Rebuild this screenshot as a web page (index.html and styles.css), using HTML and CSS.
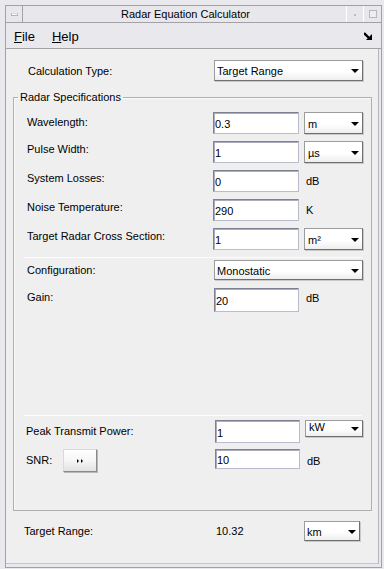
FILE: index.html
```html
<!DOCTYPE html>
<html lang="en">
<head>
    <meta charset="UTF-8">
    <meta name="viewport" content="width=device-width, initial-scale=1.0">
    <title>Radar Equation Calculator</title>
    <link rel="stylesheet" href="styles.css">
</head>
<body>
    <div class="window">
        <div class="titlebar">
            <div class="tb-btn tb-menu"><span class="tb-dash"></span></div>
            <div class="tb-title">Radar Equation Calculator</div>
            <div class="tb-btn tb-min"><span class="tb-dot"></span></div>
            <div class="tb-btn tb-max"><span class="tb-square"></span></div>
        </div>

        <div class="menubar">
            <span class="menu"><u>F</u>ile</span>
            <span class="menu"><u>H</u>elp</span>
            <svg class="menu-arrow" width="8" height="8" viewBox="0 0 8 8">
                <path d="M0 1 L5 6" stroke="#000" stroke-width="2.4"/>
                <path d="M8 2 L8 8 L2 8 Z" fill="#000"/>
            </svg>
        </div>

        <div class="content">
            <div class="row calc-row">
                <label>Calculation Type:</label>
                <div class="combo combo-wide">Target Range<span class="arrow"></span></div>
            </div>

            <fieldset class="group">
                <legend>Radar Specifications</legend>

                <div class="row field-row">
                    <label>Wavelength:</label>
                    <input class="num" type="text" value="0.3">
                    <div class="combo combo-unit">m<span class="arrow"></span></div>
                </div>
                <div class="row field-row">
                    <label>Pulse Width:</label>
                    <input class="num" type="text" value="1">
                    <div class="combo combo-unit">&micro;s<span class="arrow"></span></div>
                </div>
                <div class="row field-row">
                    <label>System Losses:</label>
                    <input class="num" type="text" value="0">
                    <span class="unit">dB</span>
                </div>
                <div class="row field-row">
                    <label>Noise Temperature:</label>
                    <input class="num" type="text" value="290">
                    <span class="unit">K</span>
                </div>
                <div class="row field-row">
                    <label>Target Radar Cross Section:</label>
                    <input class="num" type="text" value="1">
                    <div class="combo combo-unit">m&sup2;<span class="arrow"></span></div>
                </div>

                <div class="separator"></div>

                <div class="row config-row">
                    <label>Configuration:</label>
                    <div class="combo combo-config">Monostatic<span class="arrow"></span></div>
                </div>
                <div class="row gain-row">
                    <label>Gain:</label>
                    <input class="num num-tall" type="text" value="20">
                    <span class="unit unit-high">dB</span>
                </div>

                <div class="separator separator-low"></div>

                <div class="row lower-row power-row">
                    <label>Peak Transmit Power:</label>
                    <input class="num" type="text" value="1">
                    <div class="combo combo-unit combo-short">kW<span class="arrow"></span></div>
                </div>
                <div class="row lower-row snr-row">
                    <div class="snr-label">
                        <label>SNR:</label>
                        <button class="small-btn">
                            <svg width="7" height="4" viewBox="0 0 7 4">
                                <path d="M0 0 L2 2 L0 4 Z M4 0 L6 2 L4 4 Z" fill="#000"/>
                            </svg>
                        </button>
                    </div>
                    <input class="num num-short" type="text" value="10">
                    <span class="unit">dB</span>
                </div>
            </fieldset>

            <div class="row result-row">
                <label>Target Range:</label>
                <span class="result">10.32</span>
                <div class="combo combo-result">km<span class="arrow"></span></div>
            </div>
        </div>
    </div>
</body>
</html>
```

FILE: styles.css
```css
body {
    margin: 0;
    padding-top: 5px;
    background-color: #e9e9ed;
    font-family: "Liberation Sans", Arial, sans-serif;
    font-size: 11px;
    color: #000;
    width: 384px;
    height: 564px;
    overflow: hidden;
}

.window {
    margin-left: 5px;
    width: 377px;
    height: 563px;
    box-sizing: border-box;
    border: 1px solid #a2a2a6;
    display: flex;
    flex-direction: column;
}

/* title bar */
.titlebar {
    height: 16px;
    border-bottom: 1px solid #a2a2a6;
    display: flex;
    background-color: #e8e8ec;
}

.tb-btn {
    display: flex;
    align-items: center;
    justify-content: center;
}

.tb-menu {
    width: 16px;
    border-right: 1px solid #a2a2a6;
}

.tb-dash {
    width: 5px;
    height: 1px;
    background-color: #fff;
    border: 1px solid #b4b4b8;
    border-top-color: #d8d8dc;
}

.tb-title {
    flex: 1;
    text-align: center;
    line-height: 16px;
    padding-left: 2px;
}

.tb-min {
    width: 16px;
    border-left: 1px solid #fff;
    border-right: 1px solid #fff;
}

.tb-dot {
    width: 2px;
    height: 2px;
    background-color: #bcbcc0;
    margin-top: 1px;
}

.tb-max {
    width: 17px;
}

.tb-square {
    width: 6px;
    height: 6px;
    border: 1px solid #b8b8bc;
    background-color: #eeeef2;
}

/* menu bar */
.menubar {
    height: 25px;
    border-bottom: 1px solid #a2a2a6;
    display: flex;
    align-items: center;
    padding-left: 8px;
    padding-right: 9px;
    font-size: 13px;
    background-color: #e9e8ed;
}

.menu {
    margin-right: 17px;
    padding-top: 2px;
}

.menu-arrow {
    margin-left: auto;
    margin-top: 1px;
}

/* content panel */
.content {
    flex: 1;
    background-color: #efefef;
    margin: 0 2px 3px 0;
    border-right: 1px solid #b6b6ba;
    border-bottom: 1px solid #c6c6ca;
}

.row {
    display: grid;
    align-items: center;
}

label {
    white-space: nowrap;
}

.calc-row {
    margin-top: 11px;
    padding-left: 22px;
    grid-template-columns: 186px 149px;
    height: 21px;
}

.group {
    margin: 10px 0 0 7px;
    width: 359px;
    box-sizing: border-box;
    padding: 0 8px 38px 13px;
    border: 1px solid #b0b0b4;
    box-shadow: inset 1px 1px 0 #fafafa;
}

.group legend {
    margin-left: -9px;
    padding: 0 2px;
    line-height: 13px;
}

.field-row {
    grid-template-columns: 181px 86px 59px;
    column-gap: 5px;
    height: 22px;
    margin-top: 7px;
}

.field-row:first-of-type {
    margin-top: 8px;
}

/* labels sit a little above the middle of their box */
.field-row label,
.gain-row label {
    margin-top: -6px;
}

.field-row:first-of-type label {
    margin-top: -2px;
}

.separator {
    margin-top: 7px;
    border-top: 1px solid #fdfdfd;
    margin-right: 1px;
    margin-left: -3px;
}

.separator-low {
    margin-top: 103px;
}

.config-row {
    grid-template-columns: 187px 149px;
    height: 20px;
    margin-top: 2px;
}

.gain-row {
    grid-template-columns: 182px 85px 59px;
    column-gap: 5px;
    height: 24px;
    margin-top: 8px;
}

.lower-row {
    grid-template-columns: 184px 85px 58px;
    column-gap: 5px;
    margin-left: -1px;
}

.power-row {
    height: 23px;
    margin-top: 4px;
    align-items: start;
}

.power-row label {
    align-self: center;
    margin-top: -2px;
}

.snr-row {
    height: 23px;
    margin-top: 6px;
}

.snr-label {
    display: flex;
    align-items: center;
}

.snr-label label {
    width: 37px;
    margin-top: -2px;
}

/* inputs */
.num {
    width: 100%;
    height: 100%;
    box-sizing: border-box;
    margin: 0;
    padding: 2px 0 0 1px;
    font-family: inherit;
    font-size: 11px;
    background-color: #fff;
    border: 1px solid #b9bccb;
    border-top-color: #7d8192;
    border-left-color: #7d8192;
    box-shadow: inset 1px 1px 0 #a9adbd;
    outline: none;
}

.num-short {
    height: 20px;
    align-self: start;
}

.unit {
    padding-left: 2px;
}

.unit-high {
    margin-top: -5px;
}

/* combo boxes */
.combo {
    height: 100%;
    box-sizing: border-box;
    display: flex;
    align-items: center;
    justify-content: space-between;
    padding: 1px 3px 0 2px;
    background: linear-gradient(#ffffff, #ffffff 55%, #eeeeee);
    border: 1px solid #9c9c9c;
    border-right-color: #6f6f6f;
    border-bottom-color: #6f6f6f;
    box-shadow: 1px 1px 0 #c9c9c9;
}

.combo-unit {
    padding-left: 3px;
}

.combo-short {
    height: 17px;
    align-items: start;
    padding-top: 0;
}

.combo-short .arrow {
    margin-top: 6px;
}

.arrow {
    width: 0;
    height: 0;
    border-left: 4px solid transparent;
    border-right: 4px solid transparent;
    border-top: 4px solid #000;
}

/* small button */
.small-btn {
    width: 34px;
    height: 23px;
    padding: 0;
    margin: 0;
    display: flex;
    align-items: center;
    justify-content: center;
    background: linear-gradient(#ffffff, #f6f6f6 50%, #e2e2e2);
    border: 1px solid #dadada;
    border-right-color: #8a8a8a;
    border-bottom-color: #8a8a8a;
    box-shadow: 1px 1px 0 #b8b8b8;
}

/* result */
.result-row {
    grid-template-columns: 192px 88px 56px;
    padding-left: 18px;
    margin-top: 10px;
    height: 20px;
}
```
